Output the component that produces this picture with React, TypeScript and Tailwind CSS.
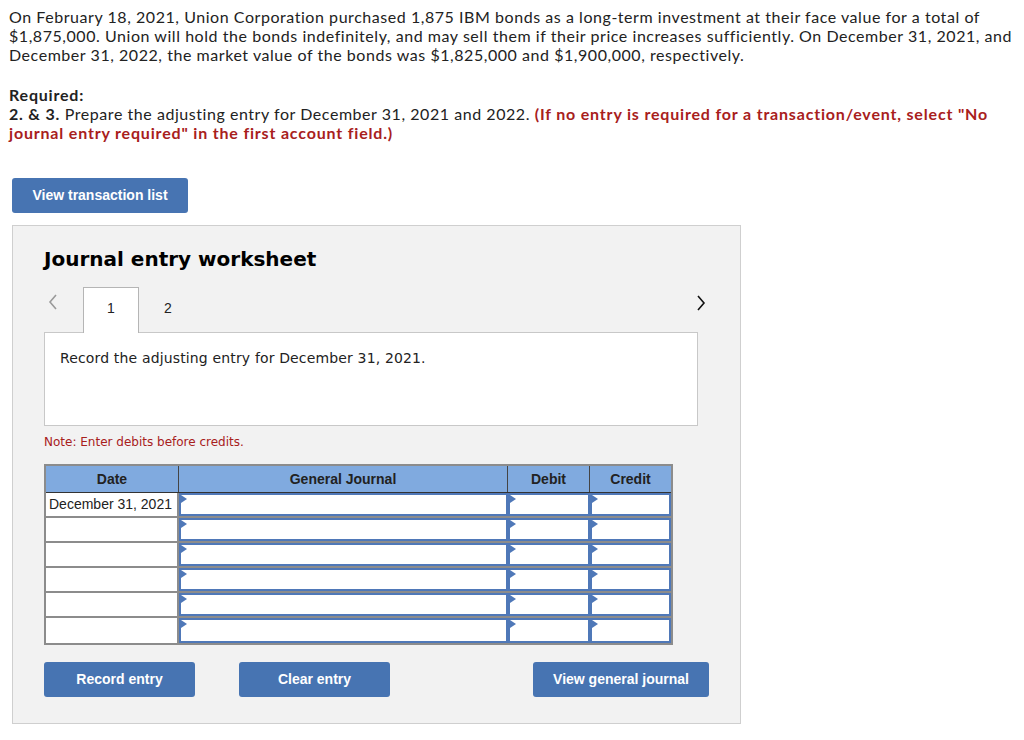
import type { ReactNode } from 'react';

const body = '"Lato", "Liberation Sans", sans-serif';
const verdana = '"DejaVu Sans", Verdana, sans-serif';
const arial = '"Liberation Sans", Arial, sans-serif';

function BlueButton({ children, className = '' }: { children: ReactNode; className?: string }) {
  return (
    <button
      className={`flex h-[35px] items-center justify-center rounded-[3px] bg-[#4774b2] text-[14px] font-bold text-white ${className}`}
      style={{ fontFamily: arial }}
    >
      {children}
    </button>
  );
}

function Chevron({ dir, color }: { dir: 'left' | 'right'; color: string }) {
  return (
    <svg width="10" height="16" viewBox="0 0 10 16" fill="none">
      <polyline
        points={dir === 'left' ? '8,1 2,8 8,15' : '2,1 8,8 2,15'}
        stroke={color}
        strokeWidth="1.6"
        strokeLinejoin="miter"
      />
    </svg>
  );
}

function InputCell() {
  return (
    <div className="relative h-full border-2 border-[#4f78b8] bg-white">
      <span className="absolute left-0 top-0 h-0 w-0 border-y-[4px] border-l-[6px] border-y-transparent border-l-[#4f78b8]" />
    </div>
  );
}

const rows = ['December 31, 2021', '', '', '', '', ''];

export default function App() {
  return (
    <div className="min-h-[740px] w-[1024px] bg-white text-[#222]">
      <div className="px-[9px] pt-[7px] text-[16px] leading-[19px] tracking-[0.55px]" style={{ fontFamily: body }}>
        <p>
          On February 18, 2021, Union Corporation purchased 1,875 IBM bonds as a long-term investment at their face value for a total of
          <br />
          $1,875,000. Union will hold the bonds indefinitely, and may sell them if their price increases sufficiently. On December 31, 2021, and
          <br />
          December 31, 2022, the market value of the bonds was $1,825,000 and $1,900,000, respectively.
        </p>
        <p className="mt-[21px] font-bold tracking-[0.8px]">Required:</p>
        <p>
          <span className="font-bold tracking-[0.8px]">2. &amp; 3.</span> Prepare the adjusting entry for December 31, 2021 and 2022.{' '}
          <span className="font-bold tracking-[0.82px] text-[#a8201c]">
            (If no entry is required for a transaction/event, select "No
            <br />
            journal entry required" in the first account field.)
          </span>
        </p>
      </div>

      <div className="ml-3 mt-[36px]">
        <BlueButton className="w-[176px]">View transaction list</BlueButton>
      </div>

      <div className="ml-3 mt-3 h-[499px] w-[729px] border border-[#cfcfcf] bg-[#f2f2f2] pl-[31px] pt-[21px]">
        <h2 className="text-[20px] font-bold leading-6 text-black" style={{ fontFamily: verdana }}>
          Journal entry worksheet
        </h2>

        <div className="mt-4 flex h-[45px] w-[662px] items-start" style={{ fontFamily: arial }}>
          <div className="mt-[7px] w-[39px] pl-1">
            <Chevron dir="left" color="#9a9a9a" />
          </div>
          <div className="relative z-10 flex h-[46px] w-[56px] justify-center border border-b-0 border-[#b5b5b5] bg-white pt-[10px] text-[14px]">
            1
          </div>
          <div className="w-[58px] pt-[11px] text-center text-[14px]">2</div>
          <div className="ml-auto mt-2">
            <Chevron dir="right" color="#111" />
          </div>
        </div>

        <div className="h-[94px] w-[654px] border border-[#c8c8c8] bg-white px-[15px] pt-[15px] text-[14px] tracking-[0.15px]" style={{ fontFamily: verdana }}>
          Record the adjusting entry for December 31, 2021.
        </div>

        <p className="mt-[8px] text-[12px] leading-4 text-[#a8201c]" style={{ fontFamily: verdana }}>
          Note: Enter debits before credits.
        </p>

        <div className="mt-[14px] w-[629px] border-2 border-[#8c8c8c] bg-white" style={{ fontFamily: arial }}>
          <div className="grid h-[27px] grid-cols-[133px_329px_82px_81px] border-b border-[#333] bg-[#80aadf] text-[14px] font-bold text-[#222]">
            <div className="flex items-center justify-center border-r border-[#444]">Date</div>
            <div className="flex items-center justify-center border-r border-[#444]">General Journal</div>
            <div className="flex items-center justify-center border-r border-[#444]">Debit</div>
            <div className="flex items-center justify-center">Credit</div>
          </div>
          {rows.map((d, i) => (
            <div
              key={i}
              className={`grid h-[25px] grid-cols-[133px_329px_82px_81px] ${i < rows.length - 1 ? 'border-b-2 border-[#8c8c8c]' : ''}`}
            >
              <div className="flex items-center border-r-2 border-[#8c8c8c] pl-[3px] text-[14px]">{d}</div>
              <InputCell />
              <InputCell />
              <InputCell />
            </div>
          ))}
        </div>

        <div className="mt-[17px] flex w-[665px]">
          <BlueButton className="w-[151px]">Record entry</BlueButton>
          <BlueButton className="ml-[44px] w-[151px]">Clear entry</BlueButton>
          <BlueButton className="ml-auto w-[176px]">View general journal</BlueButton>
        </div>
      </div>
    </div>
  );
}
